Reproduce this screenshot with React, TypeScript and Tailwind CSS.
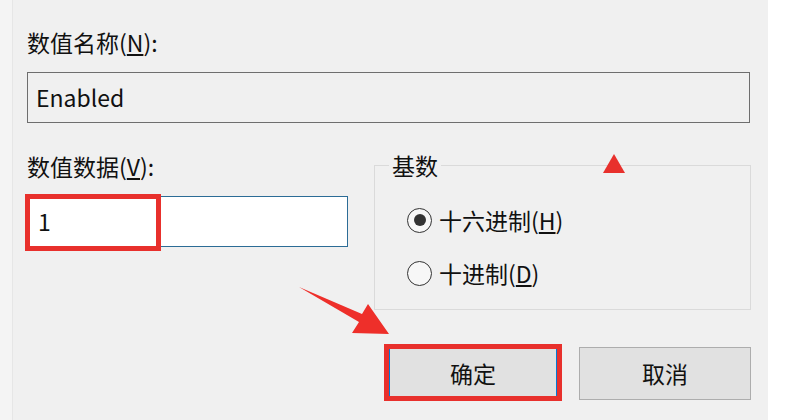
import React from 'react';

const font = { fontFamily: '"Noto Sans CJK SC", "Noto Sans", sans-serif' };

function Radio({ checked, label, mnemonic }: { checked?: boolean; label: string; mnemonic: string }) {
  return (
    <label className="flex items-center h-[30px] gap-[7px]">
      <span className="w-[25px] h-[25px] rounded-full border-[1.5px] border-[#333] bg-[#f7f7f7] flex items-center justify-center">
        {checked && <span className="w-[12px] h-[12px] rounded-full bg-[#333]" />}
      </span>
      <span className="text-[23px] leading-[26px] text-[#111]">
        {label}(<span className="underline underline-offset-2">{mnemonic}</span>)
      </span>
    </label>
  );
}

function App() {
  return (
    <div className="w-[790px] h-[420px] bg-white flex overflow-hidden" style={font}>
      <div className="w-[768px] h-full bg-[#f0f0f0] relative flex">
        <div className="w-[13px] h-full bg-[#f4f4f4] border-r border-[#e6e6e6]" />

        <div className="flex-1 pl-[14px] pt-[29px] text-[#111]">
          {/* value name */}
          <div className="text-[23px] leading-[26px]">
            数值名称(<span className="underline underline-offset-2">N</span>):
          </div>
          <div className="mt-[17px] w-[723px] h-[51px] border border-[#6e6e6e] bg-[#f0f0f0] flex items-center px-[8px] text-[23px]">
            Enabled
          </div>

          <div className="flex">
            {/* value data */}
            <div className="w-[321px]">
              <div className="mt-[30px] text-[23px] leading-[26px]">
                数值数据(<span className="underline underline-offset-2">V</span>):
              </div>
              <div className="relative mt-[17px] w-[321px] h-[51px] border border-[#2c6c96] bg-white flex items-center px-[10px] text-[23px]">
                1
                <div className="absolute left-[-3px] top-[-3px] w-[136px] h-[57px] border-[5px] border-[#e8302c]" />
              </div>
            </div>

            {/* base group */}
            <fieldset className="ml-[26px] mt-[29px] w-[377px] h-[158px] border border-[#dadada] pl-[14px]">
              <legend className="px-[3px] text-[23px] leading-[26px]">基数</legend>
              <div className="ml-[18px] mt-[27px] flex flex-col gap-[23px]">
                <Radio checked label="十六进制" mnemonic="H" />
                <Radio label="十进制" mnemonic="D" />
              </div>
            </fieldset>
          </div>

          {/* buttons */}
          <div className="flex mt-[37px] ml-[361px] gap-[21px]">
            <div className="relative">
              <button className="w-[170px] h-[52px] bg-[#e1e1e1] border-[2px] border-[#0078d7] text-[23px] text-[#111]">
                确定
              </button>
              <div className="absolute left-[-4px] top-[-3px] w-[178px] h-[57px] border-[5px] border-[#e8302c]" />
            </div>
            <button className="w-[172px] h-[53px] bg-[#e1e1e1] border border-[#adadad] text-[23px] text-[#111]">
              取消
            </button>
          </div>
        </div>

        {/* annotations */}
        <svg className="absolute left-0 top-0 pointer-events-none" width="768" height="420">
          <polygon points="603,173 614,154 625,173" fill="#e8302c" />
          <polygon points="299,287 362,314 368,304 389,334 352,333 359,322" fill="#ee2f2a" />
        </svg>
      </div>
      <div className="flex-1 bg-white" />
    </div>
  );
}

export default App;
